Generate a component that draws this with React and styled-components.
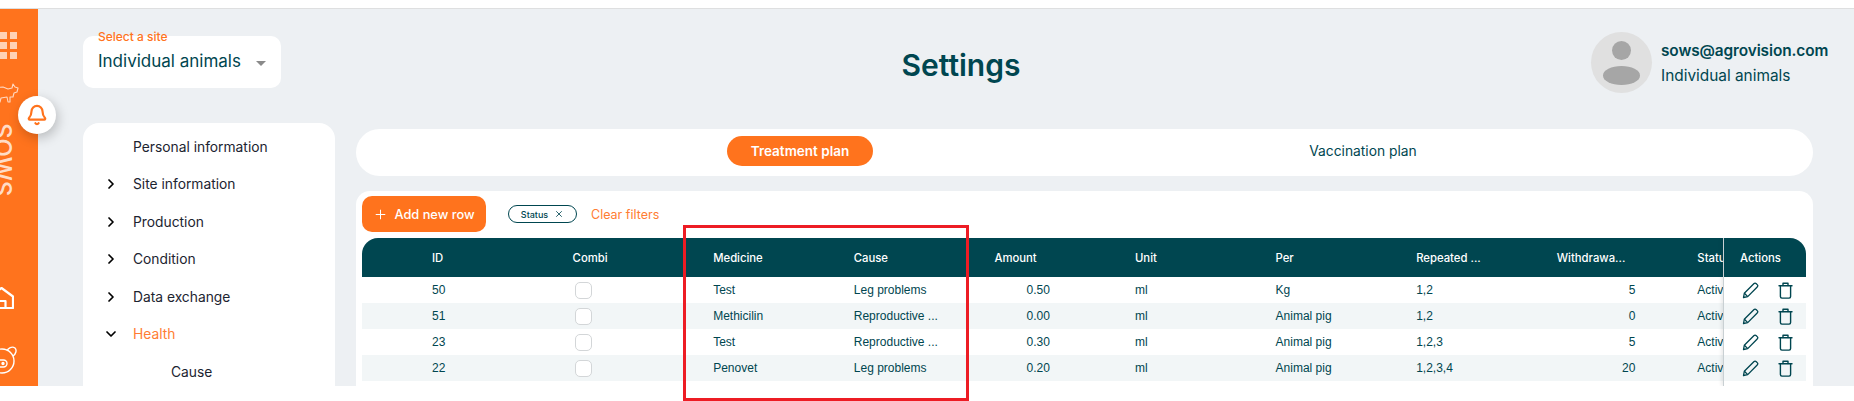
import React from "react";
import styled, { createGlobalStyle } from "styled-components";
import { Bell, ChevronRight, ChevronDown, Plus, X } from "lucide-react";

const TEAL = "#004650";
const ORANGE = "#ff731d";
const UI_FONT = '"Inter", "Noto Sans", sans-serif';

const GlobalStyle = createGlobalStyle`
  html, body {
    margin: 0;
    padding: 0;
    background: #fff;
    overflow: hidden;
  }
  #root {
    width: 1854px;
    height: 401px;
  }
  * {
    box-sizing: border-box;
  }
`;

const Page = styled.div`
  position: relative;
  width: 1854px;
  height: 401px;
  padding-top: 8px;
  overflow: hidden;
  font-family: ${UI_FONT};
`;

const Shell = styled.div`
  display: flex;
  height: 378px;
  border-top: 1px solid #dedfe0;
  overflow: hidden;
`;

const Sidebar = styled.aside`
  flex: 0 0 38px;
  background: ${ORANGE};
  overflow: hidden;
  display: flex;
  flex-direction: column;
  align-items: flex-start;
  padding-top: 23px;
`;

const SideIcon = styled.svg`
  display: block;
  flex: none;
  margin-left: ${(p) => p.$left}px;
  margin-top: ${(p) => p.$top}px;
`;

const SideTitle = styled.div`
  writing-mode: vertical-rl;
  margin-left: -12px;
  margin-top: 20px;
  font-size: 24px;
  line-height: 28px;
  font-weight: 500;
  color: #ffdcc6;
  height: 96px;
`;

const BellButton = styled.div`
  position: absolute;
  left: 18px;
  top: 96px;
  width: 38px;
  height: 38px;
  border-radius: 50%;
  background: #fff;
  color: ${ORANGE};
  display: flex;
  align-items: center;
  justify-content: center;
  box-shadow: 2px 4px 12px rgba(0, 0, 0, 0.22);
`;

const Main = styled.main`
  flex: 1;
  min-width: 0;
  background: #edf0f3;
  padding: 27px 41px 0 45px;
  overflow: hidden;
`;

const Header = styled.header`
  display: flex;
  align-items: flex-start;
  height: 87px;
`;

const SiteSelect = styled.div`
  position: relative;
  flex: none;
  width: 198px;
  height: 52px;
  background: #fff;
  border-radius: 10px;
  display: flex;
  align-items: center;
  justify-content: space-between;
  padding: 0 15px 2px;
  font-size: 17px;
  color: ${TEAL};
`;

const SelectLabel = styled.span`
  position: absolute;
  left: 15px;
  top: -6px;
  font-size: 12px;
  line-height: 13px;
  font-weight: 500;
  color: ${ORANGE};
`;

const Caret = styled.span`
  width: 0;
  height: 0;
  margin-top: 4px;
  border-left: 5px solid transparent;
  border-right: 5px solid transparent;
  border-top: 5px solid #8a8a8a;
`;

const Title = styled.h1`
  flex: 1;
  margin: 10px 0 0;
  padding-left: 50px;
  text-align: center;
  font-size: 30px;
  line-height: 38px;
  font-weight: 600;
  color: ${TEAL};
`;

const User = styled.div`
  flex: none;
  width: 222px;
  margin-top: -4px;
  display: flex;
  align-items: center;
  gap: 9px;
`;

const Avatar = styled.div`
  flex: none;
  width: 61px;
  height: 61px;
  border-radius: 50%;
  background: #e0e0e0;
  display: flex;
  flex-direction: column;
  align-items: center;
  gap: 6px;
  padding-top: 9px;
`;

const AvatarHead = styled.span`
  width: 19px;
  height: 19px;
  border-radius: 50%;
  background: #a6a6a6;
`;

const AvatarBody = styled.span`
  width: 37px;
  height: 19px;
  border-radius: 50%;
  background: #a6a6a6;
`;

const UserText = styled.div`
  display: flex;
  flex-direction: column;
  gap: 7px;
  margin-top: 1px;
  color: ${TEAL};
  font-size: 15.4px;
  line-height: 18px;
  white-space: nowrap;
`;

const UserMail = styled.span`
  font-weight: 600;
  letter-spacing: -0.1px;
`;

const Body = styled.div`
  display: flex;
  gap: 21px;
  align-items: flex-start;
`;

const Nav = styled.nav`
  flex: none;
  width: 252px;
  height: 300px;
  background: #fff;
  border-radius: 16px;
  padding-top: 5px;
`;

const NavRow = styled.div`
  display: flex;
  align-items: center;
  height: 37.5px;
  padding-left: ${(p) => (p.$sub ? 88 : 50)}px;
  position: relative;
  font-size: 13.8px;
  color: ${(p) => (p.$active ? "#ff7d33" : "#1c2430")};
`;

const NavArrow = styled.span`
  position: absolute;
  left: 20px;
  top: 50%;
  margin-top: -8px;
  height: 16px;
  color: #000;
`;

const Content = styled.div`
  flex: 1;
  min-width: 0;
  margin-top: 6px;
`;

const Tabs = styled.div`
  height: 47px;
  background: #fff;
  border-radius: 24px;
  display: flex;
  align-items: center;
  padding: 0 0 4px 371px;
`;

const Tab = styled.div`
  flex: none;
  width: ${(p) => (p.$active ? 146 : 980)}px;
  height: 30px;
  border-radius: 15px;
  background: ${(p) => (p.$active ? ORANGE : "transparent")};
  color: ${(p) => (p.$active ? "#fff" : TEAL)};
  font-size: ${(p) => (p.$active ? 13.5 : 13.8)}px;
  font-weight: ${(p) => (p.$active ? 600 : 400)};
  display: flex;
  align-items: center;
  justify-content: center;
`;

const Card = styled.section`
  margin-top: 15px;
  height: 220px;
  background: #fff;
  border-radius: 14px 14px 0 0;
  padding: 5px 7px 0 6px;
`;

const Toolbar = styled.div`
  display: flex;
  align-items: center;
  height: 36px;
  margin-bottom: 6px;
`;

const AddButton = styled.button`
  width: 124px;
  height: 36px;
  border: 0;
  border-radius: 10px;
  background: ${ORANGE};
  color: #fff;
  font-family: inherit;
  font-size: 12.8px;
  font-weight: 500;
  display: flex;
  align-items: center;
  justify-content: center;
  gap: 6px;
  padding: 0;
`;

const Chip = styled.span`
  margin-left: 22px;
  width: 69px;
  height: 18px;
  border: 1px solid ${TEAL};
  border-radius: 9px;
  color: ${TEAL};
  font-size: 9px;
  font-weight: 500;
  display: flex;
  align-items: center;
  justify-content: center;
  gap: 6px;
`;

const ClearFilters = styled.span`
  margin-left: 14px;
  font-size: 12.5px;
  color: #ff7d33;
`;

const TableWrap = styled.div`
  display: flex;
  height: 148px;
  border-radius: 16px 16px 0 0;
  overflow: hidden;
`;

const Scroller = styled.div`
  flex: 0 0 1361px;
  overflow: hidden;
`;

const Line = styled.div`
  display: grid;
  grid-template-columns: repeat(10, 140.6px);
  width: 1480px;
  padding-left: 70px;
  align-items: center;
  height: ${(p) => (p.$head ? 39 : 26)}px;
  background: ${(p) => (p.$head ? TEAL : p.$odd ? "#f2f6f7" : "#fff")};
`;

const HeadCell = styled.div`
  color: #fff;
  font-size: 11.3px;
  font-weight: 500;
  white-space: nowrap;
`;

const Cell = styled.div`
  color: ${TEAL};
  font-family: "Liberation Sans", Arial, sans-serif;
  font-size: 12px;
  white-space: nowrap;
  text-align: ${(p) => (p.$right ? "right" : "left")};
  padding-right: ${(p) => p.$right || 0}px;
`;

const Check = styled.span`
  display: block;
  width: 17px;
  height: 17px;
  margin-left: 2px;
  border: 1px solid #d3d6d8;
  border-radius: 5px;
  background: #fff;
`;

const Actions = styled.div`
  flex: 1;
  border-left: 1px solid #c9d0d3;
  box-shadow: -2px 0 3px rgba(0, 0, 0, 0.08);
  z-index: 1;
`;

const ActionsHead = styled.div`
  height: 39px;
  background: ${TEAL};
  color: #fff;
  font-size: 11.3px;
  font-weight: 500;
  display: flex;
  align-items: center;
  padding-left: 16px;
`;

const ActionRow = styled.div`
  height: 26px;
  background: ${(p) => (p.$odd ? "#f2f6f7" : "#fff")};
  display: flex;
  align-items: center;
  gap: 19px;
  padding-left: 18px;
  color: ${TEAL};
`;

const Highlight = styled.div`
  position: absolute;
  left: 683px;
  top: 225px;
  width: 286px;
  height: 176px;
  border: 3px solid #ed1c24;
  pointer-events: none;
`;

const navItems = [
  { label: "Personal information" },
  { label: "Site information", arrow: "right" },
  { label: "Production", arrow: "right" },
  { label: "Condition", arrow: "right" },
  { label: "Data exchange", arrow: "right" },
  { label: "Health", arrow: "down", active: true },
  { label: "Cause", sub: true },
];

const columns = ["ID", "Combi", "Medicine", "Cause", "Amount", "Unit", "Per", "Repeated ...", "Withdrawa...", "Status"];

const rows = [
  { id: 50, medicine: "Test", cause: "Leg problems", amount: "0.50", per: "Kg", repeated: "1,2", days: 5 },
  { id: 51, medicine: "Methicilin", cause: "Reproductive ...", amount: "0.00", per: "Animal pig", repeated: "1,2", days: 0 },
  { id: 23, medicine: "Test", cause: "Reproductive ...", amount: "0.30", per: "Animal pig", repeated: "1,2,3", days: 5 },
  { id: 22, medicine: "Penovet", cause: "Leg problems", amount: "0.20", per: "Animal pig", repeated: "1,2,3,4", days: 20 },
];

function PencilIcon() {
  return (
    <svg width="17" height="17" viewBox="0 0 17 17" fill="none" stroke="currentColor" strokeWidth="1.3" strokeLinejoin="round">
      <path d="M1.5 15.5l.8-4.2L11.8 1.7c.7-.7 1.8-.7 2.5 0l.9.9c.7.7.7 1.7 0 2.4L5.7 14.6l-4.2.9z" />
      <path d="M2.4 11.3l3.3 3.3" />
    </svg>
  );
}

function TrashIcon() {
  return (
    <svg width="15" height="17" viewBox="0 0 15 17" fill="none" stroke="currentColor" strokeWidth="1.4" strokeLinecap="round" strokeLinejoin="round">
      <path d="M1 3.8h13" />
      <path d="M5 3.6V1.2h5v2.4" />
      <path d="M2.4 4v10.6c0 .9.6 1.5 1.5 1.5h7.2c.9 0 1.5-.6 1.5-1.5V4" />
    </svg>
  );
}

export default function App() {
  return (
    <Page>
      <GlobalStyle />
      <Shell>
        <Sidebar>
          <SideIcon $left={-10} $top={0} width="27" height="28" viewBox="0 0 27 28" fill="#ffd2b6">
            <rect x="0" y="0" width="7" height="7" />
            <rect x="10" y="0" width="7" height="7" />
            <rect x="20" y="0" width="7" height="7" />
            <rect x="0" y="10" width="7" height="7" />
            <rect x="10" y="10" width="7" height="7" />
            <rect x="20" y="10" width="7" height="7" />
            <rect x="0" y="20" width="7" height="7" />
            <rect x="10" y="20" width="7" height="7" />
            <rect x="20" y="20" width="7" height="7" />
          </SideIcon>
          <SideIcon $left={-8} $top={23} width="27" height="20" viewBox="0 0 27 20" fill="none" stroke="#ffd9c2" strokeWidth="1.1" strokeLinejoin="round">
            <path d="M1 5l10-1 5 2 4-1 1-4 2 3 3 1-1 4-3 1-1 4h-3v5h-2l-1-5-6 1-1 4H6l-1-5-3-1-1 3z" />
          </SideIcon>
          <SideTitle>SOWS</SideTitle>
          <SideIcon $left={-11} $top={68} width="25" height="22" viewBox="0 0 25 22" fill="none" stroke="#fff" strokeWidth="2.2" strokeLinejoin="round">
            <path d="M1 9.5L12.5 1 24 9.5V21H1z" />
            <path d="M8.5 21v-7h8v7" />
          </SideIcon>
          <SideIcon $left={-10} $top={37} width="28" height="28" viewBox="0 0 28 28" fill="none" stroke="#fff" strokeWidth="1.4" strokeLinejoin="round">
            <circle cx="12" cy="15" r="12" />
            <path d="M17 5c1-3 5-5 8-3 2 2 1 6-2 8" />
            <rect x="4" y="14" width="13" height="7" rx="3.5" />
            <circle cx="8" cy="17.5" r="1" fill="#fff" />
            <circle cx="13" cy="17.5" r="1" fill="#fff" />
          </SideIcon>
        </Sidebar>
        <Main>
          <Header>
            <SiteSelect>
              <SelectLabel>Select a site</SelectLabel>
              Individual animals
              <Caret />
            </SiteSelect>
            <Title>Settings</Title>
            <User>
              <Avatar>
                <AvatarHead />
                <AvatarBody />
              </Avatar>
              <UserText>
                <UserMail>sows@agrovision.com</UserMail>
                <span>Individual animals</span>
              </UserText>
            </User>
          </Header>
          <Body>
            <Nav>
              {navItems.map((item) => (
                <NavRow key={item.label} $sub={item.sub} $active={item.active}>
                  {item.arrow === "right" && (
                    <NavArrow>
                      <ChevronRight size={16} strokeWidth={2.6} />
                    </NavArrow>
                  )}
                  {item.arrow === "down" && (
                    <NavArrow>
                      <ChevronDown size={16} strokeWidth={2.6} />
                    </NavArrow>
                  )}
                  {item.label}
                </NavRow>
              ))}
            </Nav>
            <Content>
              <Tabs>
                <Tab $active>Treatment plan</Tab>
                <Tab>Vaccination plan</Tab>
              </Tabs>
              <Card>
                <Toolbar>
                  <AddButton>
                    <Plus size={15} strokeWidth={1.6} />
                    Add new row
                  </AddButton>
                  <Chip>
                    Status
                    <X size={10} strokeWidth={2} />
                  </Chip>
                  <ClearFilters>Clear filters</ClearFilters>
                </Toolbar>
                <TableWrap>
                  <Scroller>
                    <Line $head>
                      {columns.map((c) => (
                        <HeadCell key={c}>{c}</HeadCell>
                      ))}
                    </Line>
                    {rows.map((r, i) => (
                      <Line key={r.id} $odd={i % 2 === 1}>
                        <Cell>{r.id}</Cell>
                        <Cell>
                          <Check />
                        </Cell>
                        <Cell>{r.medicine}</Cell>
                        <Cell>{r.cause}</Cell>
                        <Cell $right={85}>{r.amount}</Cell>
                        <Cell>ml</Cell>
                        <Cell>{r.per}</Cell>
                        <Cell>{r.repeated}</Cell>
                        <Cell $right={62}>{r.days}</Cell>
                        <Cell>Active</Cell>
                      </Line>
                    ))}
                  </Scroller>
                  <Actions>
                    <ActionsHead>Actions</ActionsHead>
                    {rows.map((r, i) => (
                      <ActionRow key={r.id} $odd={i % 2 === 1}>
                        <PencilIcon />
                        <TrashIcon />
                      </ActionRow>
                    ))}
                  </Actions>
                </TableWrap>
              </Card>
            </Content>
          </Body>
        </Main>
      </Shell>
      <BellButton>
        <Bell size={22} strokeWidth={2.4} />
      </BellButton>
      <Highlight />
    </Page>
  );
}
